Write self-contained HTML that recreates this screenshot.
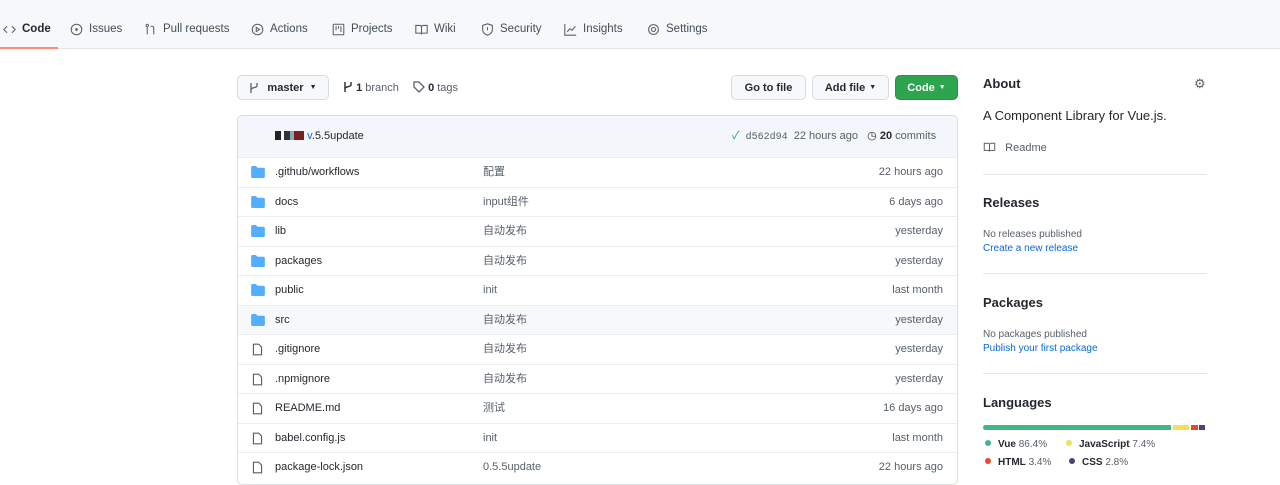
<!DOCTYPE html>
<html><head><meta charset="utf-8">
<style>
*{box-sizing:border-box;margin:0;padding:0}
body{width:1280px;height:471px;overflow:hidden;background:#fff;font-family:"Liberation Sans","Noto Sans CJK SC",sans-serif;color:#24292f;position:relative;font-size:11px;line-height:14px}
.nav{position:absolute;left:0;top:0;width:1280px;height:49px;background:#f6f8fa;border-bottom:1px solid #e1e4e8}
.nav span{position:absolute;top:22px;font-size:11.5px;color:#444d56;display:flex;align-items:center;gap:6px}
.nav svg{width:13px;height:13px;stroke:#57606a;fill:none;stroke-width:1.3}
.ul{position:absolute;left:0;top:47px;width:58px;height:2px;background:#fd8c73}
.a{position:absolute;white-space:nowrap}
.btn{position:absolute;height:25px;border:1px solid #d8dcdf;border-radius:5px;background:#f6f8fa;font-weight:bold;font-size:11px;display:flex;align-items:center;justify-content:center;color:#24292f}
.tbl{position:absolute;left:237px;top:115px;width:721px;height:370px;border:1px solid #d8dee4;border-radius:5px;overflow:hidden}
.hd{position:absolute;left:0;top:0;width:100%;height:42px;background:#f3f6fa;border-bottom:1px solid #d8dee4}
.row{position:absolute;left:0;width:100%;height:29.5px;border-top:1px solid #eaeef2;font-size:11px;color:#24292f}
.row .n,.row .m,.row .t{position:absolute;top:7px;height:14px;line-height:14px;overflow:hidden}
.row .n{left:37px}
.row .m{left:245px;color:#57606a}
.row .t{right:14px;color:#57606a}
.row .ic{position:absolute;left:13px;top:8px}
.sb h3{font-size:13px;font-weight:bold;color:#24292f}
.hr{position:absolute;left:983px;width:224px;height:1px;background:#e4e7ea}
.dot{display:inline-block;width:6px;height:6px;border-radius:50%;margin-right:7px;vertical-align:1px}
</style></head><body>
<div class="nav">
<span style="left:3px;color:#24292f;font-weight:bold"><svg viewBox="0 0 16 16"><path d="M5 4L1 8l4 4M11 4l4 4-4 4"/></svg>Code</span>
<span style="left:70px"><svg viewBox="0 0 16 16"><circle cx="8" cy="8" r="6.5"/><circle cx="8" cy="8" r="1" fill="#57606a"/></svg>Issues</span>
<span style="left:144px"><svg viewBox="0 0 16 16"><circle cx="4" cy="3" r="1.5"/><path d="M4 5v9M12 14V6c0-1-1-2-2-2H8"/></svg>Pull requests</span>
<span style="left:251px"><svg viewBox="0 0 16 16"><circle cx="8" cy="8" r="6.5"/><path d="M6.5 5.5v5l4-2.5z"/></svg>Actions</span>
<span style="left:332px"><svg viewBox="0 0 16 16"><rect x="1.5" y="1.5" width="13" height="13" rx="1"/><path d="M5 4v5M8 4v3M11 4v7"/></svg>Projects</span>
<span style="left:415px"><svg viewBox="0 0 16 16"><path d="M1 3h4.5c1.5 0 2.5 1 2.5 2v9c0-1-1-1.5-2-1.5H1zM15 3h-4.5C9 3 8 4 8 5v9c0-1 1-1.5 2-1.5h5z"/></svg>Wiki</span>
<span style="left:481px"><svg viewBox="0 0 16 16"><path d="M8 1l6 2v5c0 4-3 6-6 7-3-1-6-3-6-7V3z"/><path d="M8 5v4"/></svg>Security</span>
<span style="left:564px"><svg viewBox="0 0 16 16"><path d="M1 1v14h14M4 11l3-4 3 2 4-5"/></svg>Insights</span>
<span style="left:647px"><svg viewBox="0 0 16 16"><circle cx="8" cy="8" r="2.5"/><circle cx="8" cy="8" r="6"/></svg>Settings</span>
<div class="ul"></div>
</div>

<div class="btn" style="left:237px;top:75px;width:92px;font-weight:normal">
<svg width="10" height="12" viewBox="0 0 10 12" style="margin-right:8px;stroke:#57606a;fill:none;stroke-width:1.3"><path d="M2 1v10M8 1v3c0 2-6 1-6 4"/></svg><b>master</b>&nbsp;&nbsp;<span style="font-size:7px">▼</span></div>
<div class="a" style="left:343px;top:81px;color:#57606a"><svg width="10" height="12" viewBox="0 0 10 12" style="vertical-align:-2px;stroke:#24292f;fill:none;stroke-width:1.4"><path d="M2 1v10M8 1v3c0 2-6 1-6 4"/></svg> <b style="color:#24292f">1</b> branch</div>
<div class="a" style="left:413px;top:81px;color:#57606a"><svg width="12" height="12" viewBox="0 0 12 12" style="vertical-align:-2px;stroke:#57606a;fill:none;stroke-width:1.3"><path d="M1 1h5l5 5-5 5-5-5z"/></svg> <b style="color:#24292f">0</b> tags</div>

<div class="btn" style="left:731px;top:75px;width:75px">Go to file</div>
<div class="btn" style="left:812px;top:75px;width:77px">Add file <span style="font-size:7px;margin-left:4px">▼</span></div>
<div class="btn" style="left:895px;top:75px;width:63px;background:#2da44e;border-color:#2a9147;color:#fff">Code <span style="font-size:7px;margin-left:4px">▼</span></div>

<div class="tbl">
<div class="hd">
<div class="a" style="left:37px;top:13px;font-size:11px"><span style="display:inline-block;width:6px;height:9px;background:#222;vertical-align:-1px"></span> <span style="display:inline-block;width:20px;height:9px;background:linear-gradient(90deg,#333 30%,#8ab 30%,#8ab 50%,#722 50%);vertical-align:-1px"></span> <span style="color:#0969da">v</span>.5.5update</div>
<div class="a" style="left:494px;top:13px;color:#57606a"><span style="color:#2da44e">✓</span>&nbsp;&nbsp;<span style="font-family:'Liberation Mono',monospace;font-size:10px">d562d94</span>&nbsp;&nbsp;22 hours ago&nbsp;&nbsp;&nbsp;<span style="color:#24292f">◷</span> <b style="color:#24292f">20</b> commits</div>
</div>
<div id="rows"></div>
</div>

<div class="sb">
<h3 class="a" style="left:983px;top:77px">About</h3>
<div class="a" style="left:1194px;top:77px;color:#57606a;font-size:13px">⚙</div>
<div class="a" style="left:983px;top:109px;font-size:13px;color:#24292f">A Component Library for Vue.js.</div>
<div class="a" style="left:983px;top:141px;color:#57606a"><svg width="13" height="12" viewBox="0 0 16 16" style="vertical-align:-2px;stroke:#57606a;fill:none;stroke-width:1.3"><path d="M1 3h4.5c1.5 0 2.5 1 2.5 2v9c0-1-1-1.5-2-1.5H1zM15 3h-4.5C9 3 8 4 8 5v9c0-1 1-1.5 2-1.5h5z"/></svg>&nbsp;&nbsp;&nbsp;Readme</div>
<div class="hr" style="top:174px"></div>
<h3 class="a" style="left:983px;top:196px">Releases</h3>
<div class="a" style="left:983px;top:228px;font-size:10px;color:#57606a">No releases published</div>
<div class="a" style="left:983px;top:242px;font-size:10px;color:#0969da">Create a new release</div>
<div class="hr" style="top:273px"></div>
<h3 class="a" style="left:983px;top:296px">Packages</h3>
<div class="a" style="left:983px;top:328px;font-size:10px;color:#57606a">No packages published</div>
<div class="a" style="left:983px;top:342px;font-size:10px;color:#0969da">Publish your first package</div>
<div class="hr" style="top:373px"></div>
<h3 class="a" style="left:983px;top:396px">Languages</h3>
<div class="a" style="left:983px;top:425px;width:224px;height:5px;border-radius:3px;overflow:hidden;display:flex">
<div style="width:188px;background:#41b883"></div><div style="width:2px"></div><div style="width:16px;background:#f1e05a"></div><div style="width:2px"></div><div style="width:7px;background:#e34c26"></div><div style="width:1px"></div><div style="width:6px;background:#563d7c"></div></div>
<div class="a" style="left:985px;top:438px;font-size:10px"><span class="dot" style="background:#41b883"></span><b>Vue</b> <span style="color:#57606a">86.4%</span></div>
<div class="a" style="left:1066px;top:438px;font-size:10px"><span class="dot" style="background:#f1e05a"></span><b>JavaScript</b> <span style="color:#57606a">7.4%</span></div>
<div class="a" style="left:985px;top:456px;font-size:10px"><span class="dot" style="background:#e34c26"></span><b>HTML</b> <span style="color:#57606a">3.4%</span></div>
<div class="a" style="left:1069px;top:456px;font-size:10px"><span class="dot" style="background:#563d7c"></span><b>CSS</b> <span style="color:#57606a">2.8%</span></div>
</div>

<script>
var d=[["d",".github/workflows","配置","22 hours ago"],["d","docs","input组件","6 days ago"],["d","lib","自动发布","yesterday"],["d","packages","自动发布","yesterday"],["d","public","init","last month"],["d","src","自动发布","yesterday"],["f",".gitignore","自动发布","yesterday"],["f",".npmignore","自动发布","yesterday"],["f","README.md","测试","16 days ago"],["f","babel.config.js","init","last month"],["f","package-lock.json","0.5.5update","22 hours ago"]];
var h="";
d.forEach(function(r,i){
var ic=r[0]=="d"?'<svg class="ic" width="14" height="12" viewBox="0 0 16 14"><path d="M0 1.5C0 .7.7 0 1.5 0h4l2 2h7c.8 0 1.5.7 1.5 1.5v9c0 .8-.7 1.5-1.5 1.5h-13C.7 14 0 13.3 0 12.5z" fill="#54aeff"/></svg>':'<svg class="ic" width="13" height="13" viewBox="0 0 16 16"><path d="M3 1.5h6.5l3.5 3.5v9.5H3z" fill="none" stroke="#57606a" stroke-width="1.4"/></svg>';
h+='<div class="row" style="top:'+(41+i*29.5)+'px;'+(i==5?'background:#f6f8fa':'')+'">'+ic+'<span class="n">'+r[1]+'</span><span class="m">'+r[2]+'</span><span class="t">'+r[3]+'</span></div>';
});
document.getElementById("rows").innerHTML=h;
</script>
</body></html>
